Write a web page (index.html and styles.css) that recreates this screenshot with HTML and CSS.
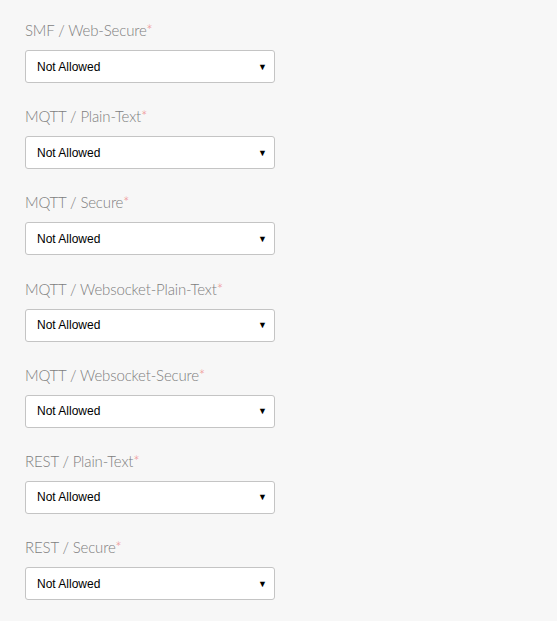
FILE: index.html
```html
<!DOCTYPE html>
<html>
<head>
<meta charset="utf-8">
<link rel="stylesheet" href="styles.css">
</head>
<body>
<div class="form">
  <div class="field"><label class="label">SMF / Web-Secure<span class="req">*</span></label><div class="select"><span>Not Allowed</span><span class="arrow">▼</span></div></div>
  <div class="field"><label class="label">MQTT / Plain-Text<span class="req">*</span></label><div class="select"><span>Not Allowed</span><span class="arrow">▼</span></div></div>
  <div class="field"><label class="label">MQTT / Secure<span class="req">*</span></label><div class="select"><span>Not Allowed</span><span class="arrow">▼</span></div></div>
  <div class="field"><label class="label">MQTT / Websocket-Plain-Text<span class="req">*</span></label><div class="select"><span>Not Allowed</span><span class="arrow">▼</span></div></div>
  <div class="field"><label class="label">MQTT / Websocket-Secure<span class="req">*</span></label><div class="select"><span>Not Allowed</span><span class="arrow">▼</span></div></div>
  <div class="field"><label class="label">REST / Plain-Text<span class="req">*</span></label><div class="select"><span>Not Allowed</span><span class="arrow">▼</span></div></div>
  <div class="field"><label class="label">REST / Secure<span class="req">*</span></label><div class="select"><span>Not Allowed</span><span class="arrow">▼</span></div></div>
</div>
</body>
</html>
```
FILE: styles.css
```css
html, body { margin: 0; padding: 0; background: #f7f7f7; }
body { width: 557px; height: 621px; overflow: hidden; }
.form { display: flex; flex-direction: column; padding: 21px 0 0 25px; gap: 24.2px; }
.field { display: flex; flex-direction: column; gap: 10px; }
.label { font-family: Lato, "Open Sans", sans-serif; font-size: 15px; color: #7e7e7e; line-height: 19px; font-weight: 300; letter-spacing: -0.15px; }
.req { color: #e88; }
.select { box-sizing: border-box; width: 250px; height: 33px; background: #fff; border: 1px solid #c4c4c4; border-radius: 3px; display: flex; align-items: center; justify-content: space-between; padding: 0 7px 0 11px; font-family: "Liberation Sans", Arial, sans-serif; font-size: 12px; color: #000; }
.arrow { font-size: 9px; }
```
